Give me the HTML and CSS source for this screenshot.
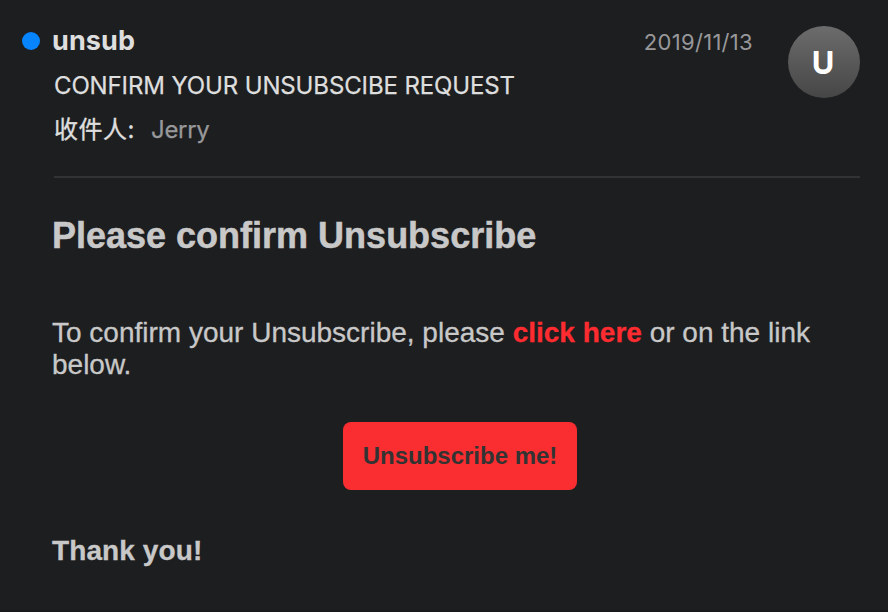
FILE: index.html
```html
<!DOCTYPE html>
<html lang="zh-CN">
<head>
<meta charset="utf-8">
<title>Mail</title>
<link rel="stylesheet" href="styles.css">
</head>
<body>
<article class="mail">
  <header class="header">
    <span class="unread"></span>
    <div class="meta">
      <div class="sender">unsub</div>
      <div class="subject">CONFIRM YOUR UNSUBSCIBE REQUEST</div>
      <div class="recipient"><span class="label">收件人:</span><span class="to">Jerry</span></div>
    </div>
    <time class="date">2019/11/13</time>
    <div class="avatar">U</div>
  </header>
  <main class="body">
    <h1 class="title">Please confirm Unsubscribe</h1>
    <p class="text">To confirm your Unsubscribe, please <a class="link">click here</a> or on the link<br>below.</p>
    <a class="button">Unsubscribe me!</a>
    <p class="thanks">Thank you!</p>
  </main>
</article>
</body>
</html>
```
FILE: styles.css
```css
* { box-sizing: border-box; }
body { margin: 0; background: #1d1e20; color: #dedede; font-family: Inter, "Noto Sans CJK SC", sans-serif; }
.mail { width: 888px; height: 612px; overflow: hidden; border-bottom: 2px solid #19191c; }
.header { display: flex; align-items: flex-start; height: 178px; margin: 0 28px 0 54px; border-bottom: 2px solid #323335; }
.unread { width: 18px; height: 18px; margin: 32px 12px 0 -32px; border-radius: 50%; background: #0784ff; }
.meta { flex: 1; margin-left: 2px; white-space: nowrap; }
.sender { margin: 23px 0 0 -2px; font-size: 27px; line-height: 36px; font-weight: 700; letter-spacing: 0.1px; }
.subject { margin-top: 9px; font-size: 24px; line-height: 36px; letter-spacing: -0.13px; -webkit-text-stroke: 0.25px; }
.recipient { display: flex; margin-top: 8px; font-size: 24px; line-height: 36px; }
.label { width: 97px; letter-spacing: 0.5px; -webkit-text-stroke: 0.35px; }
.to { color: #98989a; letter-spacing: -0.3px; -webkit-text-stroke: 0.25px; }
.date { margin: 24px 35px 0 0; font-size: 22px; line-height: 36px; letter-spacing: 0.3px; color: #98989a; }
.avatar { width: 72px; height: 72px; margin-top: 26px; border-radius: 50%; background: linear-gradient(#6c6c6c, #464646); color: #fff; font-size: 29px; line-height: 74px; font-weight: 400; text-align: center; padding-right: 2px; -webkit-text-stroke: 2px #fff; stroke-linejoin: round; }
.body { display: flex; flex-direction: column; align-items: flex-start; padding: 0 52px; color: #c8c8c8; font-family: "Liberation Sans", sans-serif; }
.title { margin: 37px 0 0; font-size: 36px; line-height: 42px; -webkit-text-stroke: 0.5px; }
.text { width: 784px; margin: 60px 0 0; font-size: 28px; line-height: 32px; -webkit-text-stroke: 0.3px; }
.link { color: #fe2c30; font-weight: 700; }
.button { width: 234px; height: 68px; margin: 41px 0 0 291px; border-radius: 8px; background: #fa2e31; color: #333; font-size: 24px; line-height: 68px; font-weight: 700; text-align: center; }
.thanks { margin: 45px 0 0; font-size: 28px; line-height: 32px; font-weight: 700; letter-spacing: 0.1px; -webkit-text-stroke: 0.3px; }
```
